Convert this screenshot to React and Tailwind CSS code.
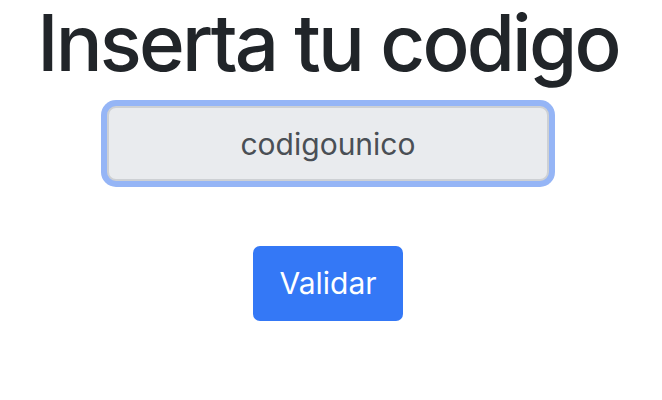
import React from "react";

export default function App() {
  return (
    <div className="min-h-screen bg-white flex flex-col items-center font-['Inter',sans-serif]">
      <h1 className="mt-[4px] text-[78px] leading-none font-medium text-[#212529] tracking-[-2.8px] -ml-[6px] whitespace-nowrap">
        Inserta tu codigo
      </h1>
      <input
        readOnly
        value="codigounico"
        className="mt-[24px] -ml-[6px] w-[442px] h-[75px] rounded-[9px] border-2 border-[#cdd0d4] bg-[#e9ebee] text-center text-[30px] text-[#4a4f55] outline-none shadow-[0_0_0_6px_#95b5f6]"
      />
      <button className="mt-[65px] -ml-[6px] w-[150px] h-[75px] rounded-[7px] bg-[#3478f6] text-white text-[30px]">
        Validar
      </button>
    </div>
  );
}
